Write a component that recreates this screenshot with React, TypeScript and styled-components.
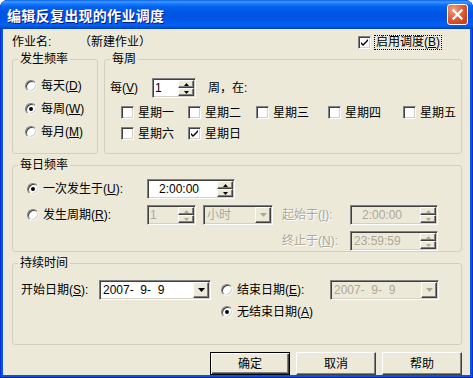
import styled, { createGlobalStyle, css } from "styled-components";
import type { ReactNode } from "react";

const FACE = "#ECE9D8";
const GRAY = "#ACA899";

const GlobalStyle = createGlobalStyle`
  html, body { margin: 0; padding: 0; background: #fff; }
  body {
    font-family: "Liberation Sans", "Noto Sans CJK SC", sans-serif;
    font-size: 12px;
    line-height: 14px;
    color: #000;
  }
  * { box-sizing: border-box; }
`;

const sunken = css`
  border: 1px solid;
  border-color: #808080 #fff #fff #808080;
  box-shadow: inset 1px 1px #404040, inset -1px -1px #d4d0c8;
`;

const raised = css`
  border: 1px solid;
  border-color: #fff #404040 #404040 #fff;
  box-shadow: inset -1px -1px #808080, inset 1px 1px ${FACE};
`;

// ---------- window frame ----------

const Window = styled.div`
  width: 473px;
  height: 378px;
  display: flex;
  flex-direction: column;
  border-radius: 8px 8px 0 0;
  overflow: hidden;
  background: #0855dd;
  box-shadow: inset 0 -1px #001e8c, inset 1px 0 #0831d9, inset -1px 0 #0831d9;
`;

const TitleBar = styled.div`
  height: 29px;
  flex: none;
  display: flex;
  align-items: center;
  justify-content: space-between;
  padding: 0 5px 0 7px;
  background: linear-gradient(
    180deg,
    #0a5ee6 0%,
    #3d95ff 6%,
    #2a8bff 10%,
    #0f73f8 16%,
    #0062ee 24%,
    #0057e5 40%,
    #0054e3 60%,
    #005aee 76%,
    #0062f5 86%,
    #0055dc 93%,
    #003db5 100%
  );
`;

const Title = styled.span`
  color: #fff;
  font-family: "Noto Sans CJK SC", sans-serif;
  font-weight: bold;
  font-size: 14px;
  letter-spacing: 0.3px;
  text-shadow: 1px 1px #0a1883;
`;

const CloseBtn = styled.div`
  width: 21px;
  height: 21px;
  border: 1px solid #fff;
  border-radius: 3px;
  background: radial-gradient(circle at 30% 25%, #f0a58a 0%, #e46c47 35%, #d4481f 70%, #c13a14 100%);
  display: flex;
  align-items: center;
  justify-content: center;
`;

const Client = styled.div`
  flex: 1;
  margin: 0 3px 3px;
  padding: 5px 8px 0 9px;
  background: ${FACE};
  display: flex;
  flex-direction: column;
`;

// ---------- header ----------

const HeaderRow = styled.div`
  height: 16px;
  display: flex;
  align-items: center;
`;

const NameLabel = styled.span`
  width: 67px;
`;

const EnableWrap = styled.div`
  margin-left: auto;
  margin-right: 20px;
  display: flex;
  align-items: center;
  gap: 3px;
`;

const FocusLabel = styled.span`
  border: 1px dotted #000;
  padding: 0 1px;
  line-height: 13px;
`;

// ---------- groups ----------

const GroupRow = styled.div`
  display: flex;
  gap: 6px;
  margin-top: 2px;
`;

const Group = styled.fieldset<{ $w?: number; $h: number; $gap?: number }>`
  margin: ${(p) => p.$gap ?? 0}px 0 0;
  padding: 0;
  min-width: 0;
  border: 1px solid #d0d0bf;
  border-radius: 3px;
  height: ${(p) => p.$h}px;
  ${(p) => (p.$w ? `width: ${p.$w}px; flex: none;` : "flex: 1;")}
`;

const Legend = styled.legend`
  margin-left: 5px;
  padding: 0 2px;
  height: 14px;
  line-height: 14px;
`;

const Pane = styled.div<{ $top: number; $left: number }>`
  padding: ${(p) => p.$top}px 0 0 ${(p) => p.$left}px;
  display: flex;
  flex-direction: column;
`;

const Line = styled.div<{ $h?: number; $gap?: number; $indent?: number }>`
  height: ${(p) => p.$h ?? 20}px;
  margin-top: ${(p) => p.$gap ?? 0}px;
  padding-left: ${(p) => p.$indent ?? 0}px;
  display: flex;
  align-items: center;
`;

const Text = styled.span<{ $w?: number; $gap?: number; $muted?: boolean }>`
  flex: none;
  white-space: pre;
  ${(p) => p.$w && `width: ${p.$w}px;`}
  margin-left: ${(p) => p.$gap ?? 0}px;
  ${(p) =>
    p.$muted &&
    css`
      color: ${GRAY};
      text-shadow: 1px 1px #fff;
    `}
`;

const DayGrid = styled.div`
  margin-top: 4px;
  padding-left: 11px;
  display: grid;
  grid-template-columns: 67px 68px 72px 75px auto;
  grid-auto-rows: 21px;
  align-items: center;
`;

// ---------- controls ----------

const BoxMark = styled.span`
  width: 13px;
  height: 13px;
  flex: none;
  background: #fff;
  ${sunken};
  display: flex;
  align-items: center;
  justify-content: center;
`;

const Choice = styled.label<{ $w?: number; $gap?: number }>`
  display: flex;
  align-items: center;
  gap: 4px;
  flex: none;
  ${(p) => p.$w && `width: ${p.$w}px;`}
  margin-left: ${(p) => p.$gap ?? 0}px;
`;

const RadioMark = styled.span<{ $on?: boolean }>`
  width: 12px;
  height: 12px;
  flex: none;
  border-radius: 50%;
  background: #fff;
  border: 1px solid;
  border-color: #808080 #f4f4f4 #f4f4f4 #808080;
  box-shadow: inset 1px 1px #404040, inset -1px -1px #d4d0c8;
  display: flex;
  align-items: center;
  justify-content: center;
  &::after {
    content: "";
    width: 4px;
    height: 4px;
    border-radius: 50%;
    background: #000;
    display: ${(p) => (p.$on ? "block" : "none")};
  }
`;

const Field = styled.div<{ $w: number; $off?: boolean; $gap?: number }>`
  width: ${(p) => p.$w}px;
  height: 20px;
  flex: none;
  margin-left: ${(p) => p.$gap ?? 0}px;
  padding: 1px;
  display: flex;
  align-items: center;
  background: ${(p) => (p.$off ? FACE : "#fff")};
  color: ${(p) => (p.$off ? GRAY : "#000")};
  ${sunken};
`;

const FieldText = styled.span<{ $inset?: number }>`
  flex: 1;
  padding-left: ${(p) => p.$inset ?? 2}px;
  white-space: pre;
  overflow: hidden;
`;

const SpinCol = styled.div`
  width: 16px;
  height: 16px;
  display: flex;
  flex-direction: column;
`;

const SpinHalf = styled.div`
  flex: 1;
  background: ${FACE};
  ${raised};
  display: flex;
  align-items: center;
  justify-content: center;
`;

const DropBtn = styled.div`
  width: 16px;
  height: 16px;
  flex: none;
  background: ${FACE};
  ${raised};
  display: flex;
  align-items: center;
  justify-content: center;
`;

const ButtonRow = styled.div`
  display: flex;
  justify-content: flex-end;
  gap: 6px;
  margin-top: 7px;
`;

const Button = styled.button<{ $default?: boolean }>`
  width: 80px;
  height: 23px;
  padding: 0;
  font: inherit;
  color: #000;
  background: ${FACE};
  ${raised};
  ${(p) =>
    p.$default &&
    css`
      border-color: #000;
      box-shadow: inset 1px 1px #fff, inset -1px -1px #404040, inset -2px -2px #808080;
    `}
`;

// ---------- pieces ----------

function Arrow({ up, off }: { up?: boolean; off?: boolean }) {
  return (
    <svg width="5" height="3" viewBox="0 0 5 3">
      <path d={up ? "M0 3h5L2.5 0z" : "M0 0h5L2.5 3z"} fill={off ? GRAY : "#000"} />
    </svg>
  );
}

function Spin({ value, w, off, inset, gap }: { value: string; w: number; off?: boolean; inset?: number; gap?: number }) {
  return (
    <Field $w={w} $off={off} $gap={gap}>
      <FieldText $inset={inset}>{value}</FieldText>
      <SpinCol>
        <SpinHalf>
          <Arrow up off={off} />
        </SpinHalf>
        <SpinHalf>
          <Arrow off={off} />
        </SpinHalf>
      </SpinCol>
    </Field>
  );
}

function Combo({ value, w, off, gap }: { value: string; w: number; off?: boolean; gap?: number }) {
  return (
    <Field $w={w} $off={off} $gap={gap}>
      <FieldText>{value}</FieldText>
      <DropBtn>
        <svg width="7" height="4" viewBox="0 0 7 4">
          <path d="M0 0h7L3.5 4z" fill={off ? GRAY : "#000"} />
        </svg>
      </DropBtn>
    </Field>
  );
}

function Check({ on, children }: { on?: boolean; children: ReactNode }) {
  return (
    <Choice>
      <BoxMark>
        {on && (
          <svg width="7" height="7" viewBox="0 0 7 7">
            <path d="M0 3l2 2 5-5v2l-5 5-2-2z" fill="#000" />
          </svg>
        )}
      </BoxMark>
      {children}
    </Choice>
  );
}

function Radio({ on, w, gap, children }: { on?: boolean; w?: number; gap?: number; children: ReactNode }) {
  return (
    <Choice $w={w} $gap={gap}>
      <RadioMark $on={on} />
      <span>{children}</span>
    </Choice>
  );
}

const days = ["星期一", "星期二", "星期三", "星期四", "星期五", "星期六", "星期日"];

export default function App() {
  return (
    <>
      <GlobalStyle />
      <Window>
        <TitleBar>
          <Title>编辑反复出现的作业调度</Title>
          <CloseBtn>
            <svg width="11" height="11" viewBox="0 0 11 11">
              <path d="M1.5 1.5l8 8M9.5 1.5l-8 8" stroke="#fff" strokeWidth="2.2" strokeLinecap="square" />
            </svg>
          </CloseBtn>
        </TitleBar>

        <Client>
          <HeaderRow>
            <NameLabel>作业名:</NameLabel>
            <span>（新建作业）</span>
            <EnableWrap>
              <BoxMark>
                <svg width="7" height="7" viewBox="0 0 7 7">
                  <path d="M0 3l2 2 5-5v2l-5 5-2-2z" fill="#000" />
                </svg>
              </BoxMark>
              <FocusLabel>
                启用调度(<u>B</u>)
              </FocusLabel>
            </EnableWrap>
          </HeaderRow>

          <GroupRow>
            <Group $w={86} $h={102}>
              <Legend>发生频率</Legend>
              <Pane $top={8} $left={12}>
                <Line $h={23}>
                  <Radio>
                    每天(<u>D</u>)
                  </Radio>
                </Line>
                <Line $h={23}>
                  <Radio on>
                    每周(<u>W</u>)
                  </Radio>
                </Line>
                <Line $h={23}>
                  <Radio>
                    每月(<u>M</u>)
                  </Radio>
                </Line>
              </Pane>
            </Group>

            <Group $h={102}>
              <Legend>每周</Legend>
              <Pane $top={12} $left={5}>
                <Line>
                  <Text $w={42}>
                    每(<u>V</u>)
                  </Text>
                  <Spin value="1" w={44} inset={1} />
                  <Text $gap={12}>周，在:</Text>
                </Line>
                <DayGrid>
                  {days.map((d) => (
                    <Check key={d} on={d === "星期日"}>
                      {d}
                    </Check>
                  ))}
                </DayGrid>
              </Pane>
            </Group>
          </GroupRow>

          <Group $h={101} $gap={4}>
            <Legend>每日频率</Legend>
            <Pane $top={7} $left={14}>
              <Line>
                <Radio on w={120}>
                  一次发生于(<u>U</u>):
                </Radio>
                <Spin value="2:00:00" w={88} inset={10} />
              </Line>
              <Line $gap={6}>
                <Radio w={120}>
                  发生周期(<u>R</u>):
                </Radio>
                <Spin value="1" w={49} off inset={1} />
                <Combo value="小时" w={70} off gap={7} />
                <Text $w={68} $gap={9} $muted>
                  起始于(<u>I</u>):
                </Text>
                <Spin value="2:00:00" w={88} off inset={10} />
              </Line>
              <Line $gap={6} $indent={255}>
                <Text $w={68} $muted>
                  终止于(<u>N</u>):
                </Text>
                <Spin value="23:59:59" w={88} off inset={2} />
              </Line>
            </Pane>
          </Group>

          <Group $h={73} $gap={4}>
            <Legend>持续时间</Legend>
            <Pane $top={10} $left={8}>
              <Line>
                <Text $w={78}>
                  开始日期(<u>S</u>):
                </Text>
                <Combo value="2007-  9-  9" w={112} />
                <Radio w={109} gap={10}>
                  结束日期(<u>E</u>):
                </Radio>
                <Combo value="2007-  9-  9" w={109} off />
              </Line>
              <Line $gap={2} $indent={200}>
                <Radio on>
                  无结束日期(<u>A</u>)
                </Radio>
              </Line>
            </Pane>
          </Group>

          <ButtonRow>
            <Button $default>确定</Button>
            <Button>取消</Button>
            <Button>帮助</Button>
          </ButtonRow>
        </Client>
      </Window>
    </>
  );
}
